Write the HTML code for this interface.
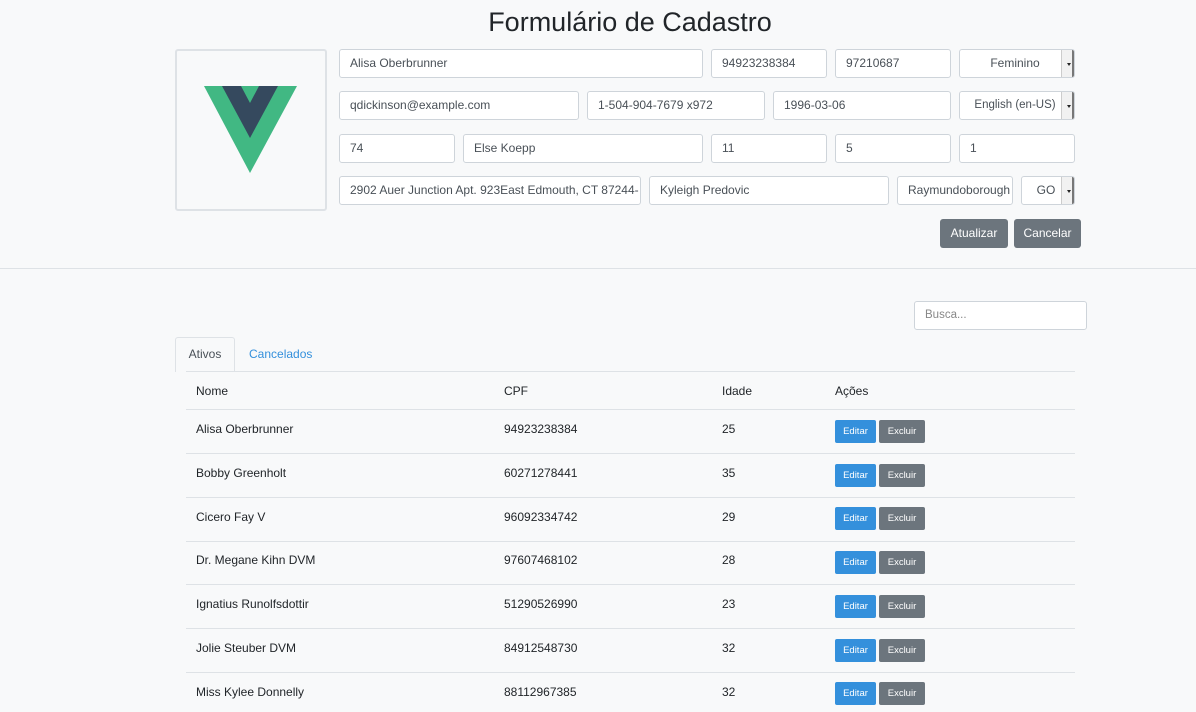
<!DOCTYPE html>
<html><head><meta charset="utf-8"><style>
*{box-sizing:border-box;margin:0;padding:0}
body{width:1196px;height:712px;background:#f8f9fa;font-family:"Liberation Sans",sans-serif;color:#212529;position:relative;overflow:hidden}
.a{position:absolute}
.in{position:absolute;height:29px;background:#fff;border:1px solid #ced4da;border-radius:3px;font-size:12px;color:#495057;padding:0 10px;line-height:27px;white-space:nowrap;overflow:hidden}
.sel{text-align:center;padding-right:14px}
.sel:after{content:"";position:absolute;right:0;top:0;width:10px;height:27px;background:#f1f1f1;border-left:1px solid #ccc;border-right:2px solid #777}
.sel:before{content:"";position:absolute;right:3px;top:13px;border-left:2px solid transparent;border-right:2px solid transparent;border-top:3px solid #222;z-index:2}
.btn{position:absolute;background:#6c757d;color:#fff;border-radius:3px;font-size:12px;text-align:center;line-height:29px;height:29px}
.t{position:absolute;font-size:12px}
.hl{position:absolute;left:186px;width:889px;height:1px;background:#dee2e6}
.e,.x{position:absolute;height:23px;line-height:23px;font-size:9.5px;color:#fff;border-radius:2px;text-align:center}
.e{background:#3490dc;left:835px;width:41px}
.x{background:#6c757d;left:879px;width:46px}
</style></head><body>
<div class="a" style="left:0;width:1196px;top:7px;text-align:center;font-size:27px;padding-left:64px">Formulário de Cadastro</div>
<div class="a" style="left:175px;top:49px;width:152px;height:162px;border:2px solid #dee2e6;border-radius:3px"></div>
<svg class="a" style="left:0;top:0" width="400" height="200"><polygon points="204,86 297,86 250,173" fill="#41b883"/><polygon points="222,86 278,86 250,138" fill="#35495e"/><polygon points="241,86 259,86 250,103" fill="#41b883"/></svg>
<div class="in" style="left:339px;top:49px;width:364px">Alisa Oberbrunner</div>
<div class="in" style="left:711px;top:49px;width:116px">94923238384</div>
<div class="in" style="left:835px;top:49px;width:116px">97210687</div>
<div class="in sel" style="left:959px;top:49px;width:116px">Feminino</div>
<div class="in" style="left:339px;top:91px;width:240px">qdickinson@example.com</div>
<div class="in" style="left:587px;top:91px;width:178px">1-504-904-7679 x972</div>
<div class="in" style="left:773px;top:91px;width:178px">1996-03-06</div>
<div class="in sel" style="left:959px;top:91px;width:116px;font-size:11.5px">English (en-US)</div>
<div class="in" style="left:339px;top:134px;width:116px">74</div>
<div class="in" style="left:463px;top:134px;width:240px">Else Koepp</div>
<div class="in" style="left:711px;top:134px;width:116px">11</div>
<div class="in" style="left:835px;top:134px;width:116px">5</div>
<div class="in" style="left:959px;top:134px;width:116px">1</div>
<div class="in" style="left:339px;top:176px;width:302px">2902 Auer Junction Apt. 923East Edmouth, CT 87244-</div>
<div class="in" style="left:649px;top:176px;width:240px">Kyleigh Predovic</div>
<div class="in" style="left:897px;top:176px;width:116px">Raymundoborough</div>
<div class="in sel" style="left:1021px;top:176px;width:54px">GO</div>
<div class="btn" style="left:940px;top:219px;width:68px">Atualizar</div>
<div class="btn" style="left:1014px;top:219px;width:67px">Cancelar</div>
<div class="a" style="left:0;top:268px;width:1196px;height:1px;background:#dee2e6"></div>
<div class="in" style="left:914px;top:301px;width:173px;color:#888;font-size:11.5px">Busca...</div>
<div class="a" style="left:175px;top:337px;width:60px;height:35px;border:1px solid #dee2e6;border-bottom:none;border-radius:3px 3px 0 0;background:#f8f9fa;font-size:12px;line-height:33px;text-align:center;color:#495057">Ativos</div>
<div class="t" style="left:249px;top:347px;color:#3490dc">Cancelados</div>
<div class="hl" style="top:371px"></div>
<div class="t" style="left:196px;top:384px">Nome</div><div class="t" style="left:504px;top:384px">CPF</div><div class="t" style="left:722px;top:384px">Idade</div><div class="t" style="left:835px;top:384px">Ações</div>
<div class="hl" style="top:409px"></div>
<div class="t" style="left:196px;top:422px">Alisa Oberbrunner</div><div class="t" style="left:504px;top:422px">94923238384</div><div class="t" style="left:722px;top:422px">25</div><div class="e" style="top:420px">Editar</div><div class="x" style="top:420px">Excluir</div>
<div class="hl" style="top:453px"></div>
<div class="t" style="left:196px;top:466px">Bobby Greenholt</div><div class="t" style="left:504px;top:466px">60271278441</div><div class="t" style="left:722px;top:466px">35</div><div class="e" style="top:464px">Editar</div><div class="x" style="top:464px">Excluir</div>
<div class="hl" style="top:497px"></div>
<div class="t" style="left:196px;top:510px">Cicero Fay V</div><div class="t" style="left:504px;top:510px">96092334742</div><div class="t" style="left:722px;top:510px">29</div><div class="e" style="top:507px">Editar</div><div class="x" style="top:507px">Excluir</div>
<div class="hl" style="top:541px"></div>
<div class="t" style="left:196px;top:553px">Dr. Megane Kihn DVM</div><div class="t" style="left:504px;top:553px">97607468102</div><div class="t" style="left:722px;top:553px">28</div><div class="e" style="top:551px">Editar</div><div class="x" style="top:551px">Excluir</div>
<div class="hl" style="top:584px"></div>
<div class="t" style="left:196px;top:597px">Ignatius Runolfsdottir</div><div class="t" style="left:504px;top:597px">51290526990</div><div class="t" style="left:722px;top:597px">23</div><div class="e" style="top:595px">Editar</div><div class="x" style="top:595px">Excluir</div>
<div class="hl" style="top:628px"></div>
<div class="t" style="left:196px;top:641px">Jolie Steuber DVM</div><div class="t" style="left:504px;top:641px">84912548730</div><div class="t" style="left:722px;top:641px">32</div><div class="e" style="top:639px">Editar</div><div class="x" style="top:639px">Excluir</div>
<div class="hl" style="top:672px"></div>
<div class="t" style="left:196px;top:685px">Miss Kylee Donnelly</div><div class="t" style="left:504px;top:685px">88112967385</div><div class="t" style="left:722px;top:685px">32</div><div class="e" style="top:682px">Editar</div><div class="x" style="top:682px">Excluir</div>
</body></html>
